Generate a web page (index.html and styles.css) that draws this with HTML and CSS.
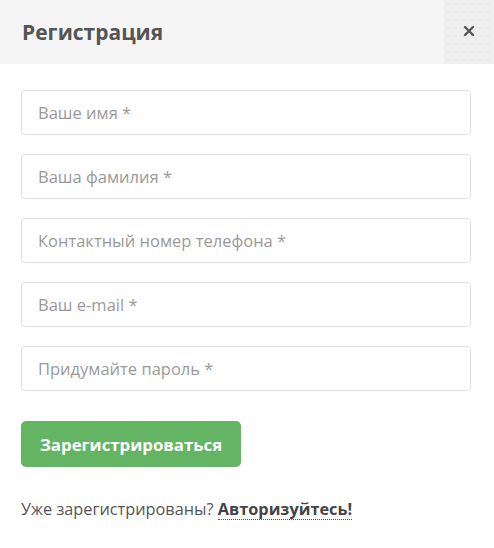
FILE: index.html
```html
<!DOCTYPE html>
<html lang="ru">
<head>
<meta charset="utf-8">
<title>Регистрация</title>
<link rel="stylesheet" href="styles.css">
</head>
<body>
<div class="modal">
  <div class="modal-header">
    <h2 class="modal-title">Регистрация</h2>
    <button class="close" type="button" aria-label="Закрыть">
      <svg width="12" height="12" viewBox="0 0 12 12"><path d="M2 2 L10 10 M10 2 L2 10" stroke="#555" stroke-width="2.4" stroke-linecap="round"/></svg>
    </button>
  </div>
  <form class="modal-body">
    <input class="field" type="text" placeholder="Ваше имя *">
    <input class="field" type="text" placeholder="Ваша фамилия *">
    <input class="field" type="tel" placeholder="Контактный номер телефона *">
    <input class="field" type="email" placeholder="Ваш e-mail *">
    <input class="field" type="password" placeholder="Придумайте пароль *">
    <button class="submit" type="button">Зарегистрироваться</button>
    <p class="login">Уже зарегистрированы? <a href="#" class="login-link">Авторизуйтесь!</a></p>
  </form>
</div>
</body>
</html>
```
FILE: styles.css
```css
html, body {
  margin: 0;
  padding: 0;
  background: #fff;
}
body {
  font-family: "Open Sans", "Noto Sans", sans-serif;
  color: #555;
}
.modal {
  width: 494px;
}
.modal-header {
  display: flex;
  align-items: stretch;
  height: 64px;
  background: #f5f5f5;
}
.modal-title {
  flex: 1;
  margin: 0;
  padding-left: 22px;
  display: flex;
  align-items: center;
  font-size: 21px;
  font-weight: 700;
  color: #555;
}
.close {
  width: 50px;
  border: 0;
  padding: 0;
  padding-bottom: 3px;
  background-color: #efefef;
  background-image: radial-gradient(circle, #e2e2e2 0.6px, transparent 0.9px);
  background-size: 8px 8px;
  display: flex;
  align-items: center;
  justify-content: center;
  cursor: pointer;
}
.modal-body {
  display: flex;
  flex-direction: column;
  align-items: flex-start;
  padding: 26px 23px 0 21px;
}
.field {
  box-sizing: border-box;
  width: 450px;
  height: 45px;
  margin: 0 0 19px;
  padding: 0 16px;
  border: 1px solid #e0e0e0;
  border-radius: 4px;
  font-family: "Open Sans", "Noto Sans", sans-serif;
  font-size: 16.5px;
  color: #555;
  outline: none;
}
.field::placeholder {
  color: #9a9a9a;
}
.submit {
  margin-top: 11px;
  height: 46px;
  padding: 0 19px;
  border: 0;
  border-radius: 5px;
  background: #63b563;
  color: #fff;
  font-family: "Open Sans", "Noto Sans", sans-serif;
  font-size: 16.8px;
  font-weight: 700;
  cursor: pointer;
}
.login {
  margin: 31px 0 0;
  font-size: 16.3px;
  color: #555;
}
.login-link {
  display: inline-block;
  line-height: 1.15;
  color: #444;
  font-weight: 700;
  text-decoration: none;
  border-bottom: 1px dotted #555;
}
```
